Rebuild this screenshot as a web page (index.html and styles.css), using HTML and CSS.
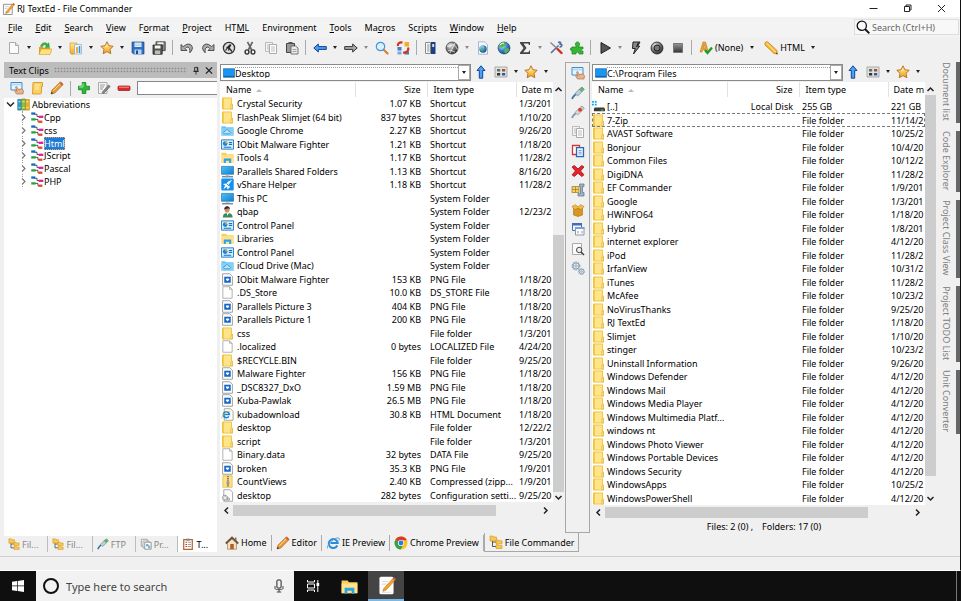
FILE: index.html
```html
<!DOCTYPE html>
<html lang="en">
<head>
<meta charset="utf-8">
<title>RJ TextEd - File Commander</title>
<link rel="stylesheet" href="styles.css">
</head>
<body>
<svg class="sprite" aria-hidden="true">
<defs>
<linearGradient id="gy" x1="0" y1="0" x2="0" y2="1"><stop offset="0" stop-color="#ffe98a"/><stop offset="1" stop-color="#f0a52a"/></linearGradient>
<linearGradient id="gb" x1="0" y1="0" x2="1" y2="1"><stop offset="0" stop-color="#4cc3f5"/><stop offset="1" stop-color="#0f7fd0"/></linearGradient>
<radialGradient id="gg" cx=".35" cy=".3" r=".8"><stop offset="0" stop-color="#d8f0ff"/><stop offset=".5" stop-color="#3a86cc"/><stop offset="1" stop-color="#123c78"/></radialGradient>
<radialGradient id="gk" cx=".35" cy=".3" r=".8"><stop offset="0" stop-color="#eee"/><stop offset=".5" stop-color="#777"/><stop offset="1" stop-color="#222"/></radialGradient>
<linearGradient id="gs" x1="0" y1="0" x2="0" y2="1"><stop offset="0" stop-color="#999"/><stop offset="1" stop-color="#333"/></linearGradient>
<symbol id="app" viewBox="0 0 14 14"><path d="M1.500 2.500h9.500v11h-9.500z" fill="#fff" stroke="#8a8a8a"/><path d="M3 5h5M3 7h3M3 11h6" stroke="#ccc"/><path d="M4.500 10.500L12 1.500l1.500 1.300L6.200 11.600 4 12.500z" fill="#f5a623" stroke="#b56a10" stroke-width=".5"/><path d="M11.300 2.300L12.200 1l1.600 1.300-1 1.200z" fill="#d9534f"/></symbol>
<symbol id="apptask" viewBox="0 0 14 14"><rect x="1.800" y=".5" width="10.400" height="13" rx="1.200" fill="#fff"/><path d="M3.500 4h5M3.500 6h4M3.500 12h7" stroke="#ddd" stroke-width=".8"/><path d="M5 9.300L12 1.500l1.500 1.300-7 7.700-2.200.8z" fill="#f5a623" stroke="#b56a10" stroke-width=".4"/><path d="M11.500 2L12.500 1l1.500 1.300-1 1.100z" fill="#d9534f"/></symbol>
<symbol id="new" viewBox="0 0 14 14"><path d="M2.500 1.500h6l3 3v8h-9z" fill="#fafafa" stroke="#aaa"/><path d="M8.500 1.500v3h3" fill="#ddd" stroke="#aaa"/></symbol>
<symbol id="open" viewBox="0 0 14 14"><path d="M1 6h4l1 1h6v6H1z" fill="#dca126"/><path d="M3 8h11l-2 5.500H1z" fill="#ffe07a" stroke="#c98d1c" stroke-width=".5"/><path d="M2.500 5.500C3 1.500 7.500.5 9.500 3l1.300-1.300.7 4.800H7l1.300-1.700C7 3.400 5 3.500 4.800 5.500z" fill="#38b03c" stroke="#1e8424" stroke-width=".4"/></symbol>
<symbol id="openpg" viewBox="0 0 14 14"><path d="M1 2h7v10l-5 1.500-2-1.500z" fill="url(#gy)" stroke="#cf8f25" stroke-width=".6"/><path d="M5.500 3.500h7v9.500h-7z" fill="#eef6fc" stroke="#93a9bb" stroke-width=".7"/><path d="M8 6v6" stroke="#eb9b23" stroke-width="1.600"/><path d="M10.500 5v7" stroke="#2b9be0" stroke-width="1.600"/></symbol>
<symbol id="star" viewBox="0 0 14 14"><path d="M7 .8l1.900 3.900 4.300.6-3.200 3 .8 4.400L7 10.600l-3.800 2.100.8-4.400-3.200-3 4.300-.6z" fill="url(#gy)" stroke="#b8691a" stroke-width=".9"/><path d="M7 3.200l1 2.500-3.500 1z" fill="#fff6c4" opacity=".7"/></symbol>
<symbol id="save" viewBox="0 0 14 14"><path d="M1 1h12v12H2.500L1 11.500z" fill="#2f6fc4" stroke="#1d4a8a" stroke-width=".7"/><path d="M3.500 1.500h7v4.500h-7z" fill="#e8f2fb"/><path d="M4 3h6M4 4.600h6" stroke="#9bb4cc" stroke-width=".6"/><path d="M3.500 8.500h7V13h-7z" fill="#b7d6f4"/><path d="M5 9.500h2V13H5z" fill="#1d4a8a"/></symbol>
<symbol id="saveall" viewBox="0 0 14 14"><path d="M4 .8h9.200v8.800H4z" fill="#888" stroke="#333" stroke-width=".8"/><path d="M5.500 1.300h6v2h-6z" fill="#eee"/><path d="M1 4h9.200v9.200H1z" fill="#555" stroke="#222" stroke-width=".8"/><path d="M2.800 4.500h5.700v3H2.800z" fill="#f4f4f4"/><path d="M3 9.500h5.200v3.500H3z" fill="#bbb"/></symbol>
<symbol id="undo" viewBox="0 0 14 14"><path d="M1 3.500v6h6L5.200 7.600C7.500 4.800 10.500 6 9.800 11.800 15 7 11.500 2 6.800 3.300L3.200 5.600z" fill="#aaa" stroke="#333" stroke-width=".8"/></symbol>
<symbol id="redo" viewBox="0 0 14 14"><g transform="matrix(-1 0 0 1 14 0)"><path d="M1 3.500v6h6L5.200 7.600C7.500 4.800 10.500 6 9.800 11.800 15 7 11.500 2 6.800 3.300L3.200 5.600z" fill="#aaa" stroke="#333" stroke-width=".8"/></g></symbol>
<symbol id="hist" viewBox="0 0 14 14"><circle cx="7" cy="7" r="5.600" fill="#ddd" stroke="#333" stroke-width="1.300"/><path d="M3.500 9.500L8 3.500M4.500 6.500c2-1 3 1 2 3M9 3.500L7 7l3 3.500" stroke="#222" stroke-width="1.200" fill="none"/></symbol>
<symbol id="cut" viewBox="0 0 14 14"><path d="M4.500.8L8.700 9M9.500.8L5.300 9" stroke="#666" stroke-width="1.700"/><ellipse cx="4" cy="11" rx="1.900" ry="2.100" fill="none" stroke="#333" stroke-width="1.400"/><ellipse cx="10" cy="11" rx="1.900" ry="2.100" fill="none" stroke="#333" stroke-width="1.400"/></symbol>
<symbol id="copy" viewBox="0 0 14 14"><path d="M1.500 1.500h7v9h-7z" fill="#f4f4f4" stroke="#bbb"/><path d="M5.500 3.500h7v9h-7z" fill="#fff" stroke="#aaa"/><path d="M7 6h4M7 8h4M7 10h4M3 4h2M3 6h2M3 8h2" stroke="#bbb"/></symbol>
<symbol id="paste" viewBox="0 0 14 14"><path d="M1.500 2.500h8v9h-8z" fill="#999" stroke="#444"/><path d="M3.500 1h4v2h-4z" fill="#555"/><path d="M6 5h4.500l2.500 2v6H6z" fill="#eee" stroke="#555" stroke-width=".8"/><path d="M7.500 8.500h4M7.500 10.500h4" stroke="#888" stroke-width=".8"/></symbol>
<symbol id="back" viewBox="0 0 14 14"><path d="M.8 7l4.500-4v2.600h8v2.800h-8V11z" fill="#4aa3ea" stroke="#123f9a" stroke-width="1"/></symbol>
<symbol id="fwd" viewBox="0 0 14 14"><path d="M13.200 7L8.700 3v2.600h-8v2.800h8V11z" fill="#aaa" stroke="#333" stroke-width="1"/></symbol>
<symbol id="find" viewBox="0 0 14 14"><path d="M8.500 8.500l4 4" stroke="#d9822b" stroke-width="2.200" stroke-linecap="round"/><circle cx="5.500" cy="5.500" r="4.200" fill="#d9f0fd" stroke="#4a95d6" stroke-width="1.200"/></symbol>
<symbol id="repl" viewBox="0 0 14 14"><path d="M8.500 1h4.500v4.500H8.500z" fill="#f2b01e"/><path d="M1.500 6h4v3.500h-4z" fill="#3b7ed0"/><path d="M1.500 10.500h4v3h-4z" fill="#7aa7de"/><path d="M8.500 10.500h4.500v3H8.500z" fill="#3b7ed0"/><path d="M6.500 1.500C3 1 1.500 3 2 5M12 6.500c1 3-1 5.500-5 5" fill="none" stroke="#d8301c" stroke-width="2.200"/></symbol>
<symbol id="book" viewBox="0 0 14 14"><path d="M1.500 1.500h5v11h-5z" fill="#fafafa" stroke="#888"/><path d="M3 4h2.500M3 6h2.500M3 8h2.500M3 10h2.500" stroke="#888"/><path d="M7 1h4.500v12H7z" fill="#1c3f82"/><path d="M8.200 3h2v3h-2z" fill="#cfe0f8"/></symbol>
<symbol id="gglobe" viewBox="0 0 14 14"><circle cx="7" cy="7" r="6" fill="url(#gk)" stroke="#333" stroke-width=".7"/><path d="M2 4.500C5 7 6 3 9 4s2 5 4 4M3 10c3-2 5 1 7 1M5 12L10 2" stroke="#fff" fill="none" stroke-width=".9" opacity=".8"/></symbol>
<symbol id="web" viewBox="0 0 14 14"><path d="M2.500.8h6l3 3v9.400h-9z" fill="#f2f8fd" stroke="#9ab" stroke-width=".8"/><circle cx="7" cy="8" r="3.700" fill="url(#gg)"/><path d="M5 6.500c2-1 3 1 2 2s0 2-1 2.500" fill="#4cb648"/></symbol>
<symbol id="globe" viewBox="0 0 14 14"><circle cx="7" cy="7" r="6" fill="url(#gg)" stroke="#123c78" stroke-width=".6"/><path d="M3 3c2-2 5-2 6 0S7 5 6 6 3 7 2 5.500zM8 8c2-1 4-1 4 .5S9 13 8 12 7 9 8 8z" fill="#58b947"/><path d="M3 4C4.500 2 6 2 7 2.500" stroke="#fff" fill="none"/></symbol>
<symbol id="sigma" viewBox="0 0 14 14"><path d="M2 1h10v3h-1l-.7-1.400H5.500L8.500 7l-3.300 4.300h5.300L11.300 9.500H12V13H2v-1.200L5.600 7 2 2.300z" fill="#444"/></symbol>
<symbol id="tools" viewBox="0 0 14 14"><path d="M2 12L9.500 4.500M9 1.500c3-1 3 .5 2 1.500l1.500.7c.5-.5 1 2-2 2.500" fill="none" stroke="#51709a" stroke-width="1.600"/><path d="M1.500 1.500l6.500 6" stroke="#889" stroke-width="1.600"/><path d="M8.500 8l4 4" stroke="#d42a20" stroke-width="2.400" stroke-linecap="round"/></symbol>
<symbol id="puz" viewBox="0 0 14 14"><path d="M2 13V9.500C-.5 10 .0 6 2 7V6h4.500C4.500 3 5.500 1 7.500 1s3 2 1 5H13v2c-2-.7-2.500 2.200 0 2v3H9c0-2.500-3-2.500-3 0z" fill="#37b534" stroke="#1b8420" stroke-width=".7"/></symbol>
<symbol id="play" viewBox="0 0 14 14"><path d="M3 1.500L12.500 7 3 12.500z" fill="#555" stroke="#222"/></symbol>
<symbol id="bolt" viewBox="0 0 14 14"><path d="M4 1h7L8.700 5.200h2L4.500 13l1.800-5.500H3.500z" fill="#888" stroke="#222" stroke-width="1"/><path d="M9.500 1.500L7.500 6" stroke="#111"/></symbol>
<symbol id="rec" viewBox="0 0 14 14"><circle cx="7" cy="7" r="6" fill="url(#gk)" stroke="#222" stroke-width=".8"/><circle cx="7" cy="7" r="3" fill="#777" stroke="#222"/></symbol>
<symbol id="stop" viewBox="0 0 14 14"><path d="M2.500 2.500h9v9h-9z" fill="url(#gs)" stroke="#777"/></symbol>
<symbol id="spell" viewBox="0 0 14 14"><path d="M1 11L4 1h2.500l3 10H7.300l-.6-2.200H3.700L3 11zM4.200 7h2L5.200 3.500z" fill="#f0a62c" stroke="#b06a12" stroke-width=".5"/><path d="M6 9l2.500 3L13 6.500" fill="none" stroke="#1d9a2a" stroke-width="2.300"/></symbol>
<symbol id="penl" viewBox="0 0 14 14"><path d="M1 1.500l2.500-.8L13 9.500l.3 3.500-3.300-.5L1 4z" fill="#f7b733" stroke="#c07a1c" stroke-width=".7"/><path d="M2.500 2l9 9" stroke="#fff0b0"/><path d="M12 12l1.500 1" stroke="#333"/></symbol>
<symbol id="pen" viewBox="0 0 14 14"><path d="M1 13l1-3.800L10.300 1l2.700 2.500L4.800 12z" fill="#ec9a38" stroke="#a85f18" stroke-width=".7"/><path d="M9.500 2l2.600 2.500L13.300 3.200 11 .7z" fill="#cf5b34"/><path d="M1 13l.7-2.200 1.500 1.500z" fill="#333"/><path d="M3.300 9.800l7-7" stroke="#ffdc8c"/></symbol>
<symbol id="mon" viewBox="0 0 14 14"><path d="M1 1.500h11v7.500H1z" fill="#eaf6fd" stroke="#3f8ccc"/><path d="M2 2.500h9v2H2z" fill="#b5dcf6"/><path d="M6.500 13L4.500 9.800l1-.6 1.500 1L5.500 6l1.200-.5L8.200 8.500l3.800-.7 1.500 2-.5 3.200z" fill="#e9b48c" stroke="#9b6a44" stroke-width=".6"/></symbol>
<symbol id="script" viewBox="0 0 14 14"><path d="M3 1.500h9.500v4H11.500v5.500c0 2-1 2-1.500 2H2.500z" fill="#fbcf62" stroke="#d6982a" stroke-width=".9"/><path d="M5 4h5M5 6h4M5 8h4" stroke="#fff1b8"/></symbol>
<symbol id="add" viewBox="0 0 14 14"><path d="M5.200 1.500h3.600v3.700h3.700v3.600H8.800v3.700H5.200V8.800H1.500V5.200h3.700z" fill="#2fb63a" stroke="#138220" stroke-width=".8"/><path d="M6 2.500v3.500H2.300" stroke="#a4eba4" fill="none"/></symbol>
<symbol id="edit" viewBox="0 0 14 14"><path d="M1.500 1.500h8.500v11H1.500z" fill="#f5f5f5" stroke="#aaa"/><path d="M3 4h5M3 6h4M3 8h3" stroke="#999"/><path d="M5 11.500l6.500-7.500 1.700 1.500-6.500 7z" fill="#888" stroke="#555" stroke-width=".6"/></symbol>
<symbol id="minus" viewBox="0 0 14 14"><rect x="1" y="5" width="12" height="4.500" rx="1" fill="#dc2a2a" stroke="#9a1414" stroke-width=".7"/><path d="M2 6.200h10" stroke="#f59a9a"/></symbol>
<symbol id="up" viewBox="0 0 14 14"><path d="M7 .8l4 4.700H8.700v7.700H5.300V5.500H3z" fill="#4aa3ea" stroke="#1642a0" stroke-width="1"/></symbol>
<symbol id="view" viewBox="0 0 14 14"><path d="M1 2h12v10H1z" fill="#e2e2e2" stroke="#999" stroke-width=".8"/><path d="M3 4h3.200v2.500H3z" fill="#575"/><path d="M8 4h3.200v2.500H8z" fill="#953"/><path d="M3 8h3.200v2.500H3z" fill="#333"/><path d="M8 8h3.200v2.500H8z" fill="#35a"/></symbol>
<symbol id="plug" viewBox="0 0 14 14"><path d="M1 13c1-3 2-3.500 4-5" stroke="#3f76a5" stroke-width="1.800" fill="none"/><path d="M4 7.500L8.500 3l2.500 2.600L6.700 10z" fill="#bcd0dc" stroke="#6f8c9c" stroke-width=".8"/><path d="M8.500 3L11 1l2.300 2.300L11 5.600z" fill="#63b96c" stroke="#5a8a66" stroke-width=".7"/></symbol>
<symbol id="plugr" viewBox="0 0 14 14"><path d="M1 13c1-3 2-3.500 4-5" stroke="#8696a5" stroke-width="1.800" fill="none"/><path d="M4 7.500L8.500 3l2.500 2.600L6.700 10z" fill="#d4dbe0" stroke="#8497a0" stroke-width=".8"/><path d="M8.500 3L11 1l2.300 2.300L11 5.600z" fill="#c8ccd0" stroke="#889" stroke-width=".7"/><circle cx="9" cy="4.800" r="1.900" fill="#dc3c22"/></symbol>
<symbol id="move" viewBox="0 0 14 14"><path d="M1.500 1.500h7v9h-7z" fill="#fff" stroke="#d03530" stroke-width="1.300"/><path d="M5.500 3.700h7v9h-7z" fill="#eaf3fd" stroke="#2c65b0" stroke-width="1.300"/><path d="M7.500 6.500h3.200M7.500 8.300h3.200M7.500 10h3.200" stroke="#6c9cd6" stroke-width=".9"/></symbol>
<symbol id="del" viewBox="0 0 14 14"><path d="M1 3l2.300-1.500L7 5l3.700-3.500L13 3 9.500 7l3.500 3.800-2.200 1.700L7 9.200l-3.700 3.300L1 10.800 4.500 7z" fill="#e4232a" stroke="#a01015" stroke-width=".8"/></symbol>
<symbol id="arch" viewBox="0 0 14 14"><path d="M1 3.500h7v6H1z" fill="#f3cf66" stroke="#a8842a" stroke-width=".8"/><path d="M1 6.500h7M4.500 3.500v6" stroke="#a8842a" stroke-width=".8"/><path d="M8.500 1H13v2.500h-1.500v6H13V13H7v-2.500h2.500v-7h-1z" fill="#9fb2c5" stroke="#58738c" stroke-width=".7"/></symbol>
<symbol id="box" viewBox="0 0 14 14"><path d="M2.500 5h9v7L7 13.500 2.500 12z" fill="#d9961e" stroke="#a56c10" stroke-width=".6"/><path d="M1 3.500l3.500-1.800L7 4l2.500-2.300L13 3.500 10 6.700 7 5 4 6.700z" fill="#f2bc4a" stroke="#b27a18" stroke-width=".6"/></symbol>
<symbol id="win" viewBox="0 0 14 14"><path d="M1.500 1.500h9v7h-9z" fill="#eef5fc" stroke="#4671b0"/><path d="M1 1h10v2.500H1z" fill="#3f6fbc"/><path d="M4.500 5.500h8.500v7.500H4.500z" fill="#fff" stroke="#8a98ac"/><path d="M4 5h9.500v2H4z" fill="#7f9fd0"/><path d="M6 9h2v2.500H6zM10 9h2v2.500h-2z" fill="#c3cad4"/></symbol>
<symbol id="prev" viewBox="0 0 14 14"><path d="M1.500 1.500h9v11h-9z" fill="#fbfbfb" stroke="#aaa"/><circle cx="8.200" cy="8" r="2.700" fill="#e9f3fa" stroke="#444"/><path d="M10 10l3 3" stroke="#444" stroke-width="1.600"/></symbol>
<symbol id="gears" viewBox="0 0 14 14"><g fill="none" stroke="#8fa5ba"><circle cx="5" cy="5" r="3.800" stroke-width="1.300" stroke-dasharray="1.600 .8"/><circle cx="5" cy="5" r="3"/><circle cx="5" cy="5" r="1.200"/><circle cx="10.500" cy="10.500" r="3" stroke-dasharray="1.500 .7"/><circle cx="10.500" cy="10.500" r="2.300"/><circle cx="10.500" cy="10.500" r=".8"/></g></symbol>
<symbol id="folder" viewBox="0 0 14 14"><path d="M2 1h9.300v6.500h1V13H2z" fill="#ffe48c" stroke="#ecc02e" stroke-width=".9"/><path d="M2 .8v12.400" stroke="#eebb1c" stroke-width="1.200"/><path d="M10.500 8.500h1.900V13h-1.900z" fill="#fbe08a" stroke="#dcae30" stroke-width=".6"/></symbol>
<symbol id="cloud" viewBox="0 0 14 14"><path d="M.5 2.500h4l1 1h8v9H.5z" fill="#6cc4f2"/><path d="M.5 4.500h13v8H.5z" fill="#84d0f7"/><path d="M4 10.500c-2-.3-1.500-2.700.3-2.500.5-2.500 4-2.300 4.200 0 2.300-.2 2.300 2.500.4 2.500z" fill="#b8e4fb" stroke="#3798d4" stroke-width=".9"/></symbol>
<symbol id="cpl" viewBox="0 0 14 14"><path d="M.5 2h13v10H.5z" fill="#d4efff" stroke="#1b7ac4"/><circle cx="4.500" cy="6" r="2.500" fill="#1783d6"/><path d="M4.500 6V3.500A2.500 2.500 0 0 1 7 6z" fill="#f3a432"/><path d="M8.500 5h3.500M8.500 7h3.500M3 10h8" stroke="#1b6fb4" stroke-width="1.200"/></symbol>
<symbol id="lib" viewBox="0 0 14 14"><path d="M.5 2h5l1 1.500h7v9H.5z" fill="#f9cf5b"/><path d="M.5 4.500h13v8H.5z" fill="#ffe28a"/><path d="M3 13V8h8v5H8.800v-2.500H5.200V13z" fill="#2ba4e6"/></symbol>
<symbol id="pc" viewBox="0 0 14 14"><path d="M.5 1.500h13v8.500H.5z" fill="url(#gb)" stroke="#2a6fa4" stroke-width=".7"/><path d="M1 12.700h12" stroke="#4a6a84" stroke-width="1.200"/><path d="M5 10.500h4v1.500H5z" fill="#b5c4d0"/></symbol>
<symbol id="desk" viewBox="0 0 14 14"><path d="M.5 2h13v10H.5z" fill="#1a95f0" stroke="#1168b4" stroke-width=".8"/><path d="M1 11h12" stroke="#0f5a9a"/></symbol>
<symbol id="vs" viewBox="0 0 14 14"><rect x=".3" y=".5" width="13.400" height="13" rx="1" fill="#1590ee"/><path d="M12 2L8 7.500l2 2-3 3-.5-3-4 2.500L4.500 8 2 6.500l4-.5L7.500 4z" fill="#fff"/><path d="M6 6l3 3" stroke="#1590ee"/></symbol>
<symbol id="user" viewBox="0 0 14 14"><path d="M2 13.500c0-4 2-5 5-5s5.500 1 5.500 5z" fill="#3c8a5c"/><ellipse cx="6.500" cy="4.800" rx="2.600" ry="3.400" fill="#c98f68"/><path d="M3.500 4.800C3.300 0 10 0 9.700 5L8.500 3.500z" fill="#3a2c24"/><path d="M6 8.500l1 3 1.500-3z" fill="#fff"/></symbol>
<symbol id="png" viewBox="0 0 14 14"><path d="M1.700.8h7.800l2.800 2.700v9.700H1.700z" fill="#fff" stroke="#8f8f8f" stroke-width=".9"/><path d="M3.500 4h7v6.500h-7z" fill="#1767c4"/><path d="M5.300 6h3.500v1.200L7 9 5.300 7.300z" fill="#fff"/></symbol>
<symbol id="file" viewBox="0 0 14 14"><path d="M2 .8h7.200L12 3.500v9.700H2z" fill="#fff" stroke="#a3a3a3" stroke-width=".9"/><path d="M9.200.8v2.700H12" fill="none" stroke="#a3a3a3" stroke-width=".8"/></symbol>
<symbol id="iefile" viewBox="0 0 14 14"><path d="M3.500.8h6.700L13 3.500v9.700H3.500z" fill="#fff" stroke="#999" stroke-width=".9"/><path d="M8.500 9A3.200 3.200 0 1 1 9 7H3" fill="none" stroke="#1c86dc" stroke-width="1.800"/><path d="M1 11.500C0 9 6 2.500 10 3.500" fill="none" stroke="#f0b429" stroke-width=".9"/></symbol>
<symbol id="zip" viewBox="0 0 14 14"><path d="M2 .8h10v12.400H2z" fill="#ffe082" stroke="#e3b840" stroke-width=".8"/><path d="M7.500 1v12" stroke="#777" stroke-width="2" stroke-dasharray="1.500 .8"/><path d="M6 7h3v3.500H6z" fill="#999"/></symbol>
<symbol id="ini" viewBox="0 0 14 14"><path d="M3 .8h6.700L12.500 3.500v9.700H3z" fill="#fff" stroke="#999" stroke-width=".9"/><circle cx="4.300" cy="9.500" r="2.500" fill="#eee" stroke="#888" stroke-width="1.500" stroke-dasharray="1.200 .6"/><circle cx="8" cy="11" r="1.300" fill="#eee" stroke="#888"/></symbol>
<symbol id="drive" viewBox="0 0 14 14"><path d="M0 1h2v2H0zM3 1h2v2H3zM0 4h2v2H0zM3 4h2v2H3z" fill="#1ba8f0"/><path d="M3 8h10l1 1.500v2.500H2V9.500z" fill="#3a3a3a"/><path d="M9.500 10.800h3" stroke="#4ee04e"/></symbol>
<symbol id="books" viewBox="0 0 14 14"><path d="M.8 1.500h3.800v11.500H.8z" fill="#2f9fc8" stroke="#1a5c80" stroke-width=".6"/><path d="M5 1h4v12H5z" fill="#8cc43c" stroke="#4c7c1c" stroke-width=".6"/><path d="M9.300 1.500h4v11.500h-4z" fill="#f0b428" stroke="#a87010" stroke-width=".6"/><path d="M1.500 4h2.500M5.800 4h2.500M10 4h2.500M1.500 10.500h2.500M5.800 10.500h2.500M10 10.500h2.500" stroke="#fff" opacity=".7"/></symbol>
<symbol id="node" viewBox="0 0 14 14"><path d="M4 3.500h3V6h3M4 9h4v2.500h2" fill="none" stroke="#333" stroke-width=".9"/><path d="M.8 1.500h4.400v2.500H.8z" fill="#1668c8"/><path d="M8.800 5h5v2.500h-5z" fill="#e01ea0"/><path d="M.8 7.800h4.700v2.500H.8z" fill="#22a83a"/><path d="M8.500 10.300h4.300v2.500H8.500z" fill="#e04a20"/></symbol>
<symbol id="ftree" viewBox="0 0 14 14"><path d="M3.500 5v6.500H8M3.500 7H8" fill="none" stroke="#555"/><path d="M1 1h3l.7 1H7.500v4H1z" fill="#f8c84a" stroke="#cf9420" stroke-width=".6"/><path d="M7 5h2.500l.6.800H13v3H7zM7 9.700h2.500l.6.800H13v3H7z" fill="#f8c84a" stroke="#cf9420" stroke-width=".6"/></symbol>
<symbol id="proj" viewBox="0 0 14 14"><path d="M1.500 1.500h7v8h-7z" fill="#fff" stroke="#999"/><path d="M3.500 3.500h7v8h-7z" fill="#fff" stroke="#999"/><path d="M5.500 5h7.500v8H5.500z" fill="#fff" stroke="#888"/><circle cx="8.500" cy="8.500" r="1.500" fill="#4ab0e0"/><path d="M9.500 9h2.500v3H9.500z" fill="#8ab"/></symbol>
<symbol id="clip" viewBox="0 0 14 14"><path d="M2 2h10v11.300H2z" fill="#fff" stroke="#b4632c" stroke-width="1.400"/><path d="M5 .7h4v2.500H5z" fill="#888"/><path d="M4 5h2M4 7.500h2M4 10h2" stroke="#c33" stroke-width="1.200"/><path d="M7 5h3.500M7 7.500h3.500M7 10h3.500" stroke="#888"/></symbol>
<symbol id="home" viewBox="0 0 14 14"><path d="M2.500 6.500L7 3l4.500 3.500v6.700h-9z" fill="#f3e2c4" stroke="#a08050" stroke-width=".7"/><path d="M.8 7.500L7 1.500l6.200 6" fill="none" stroke="#6e5038" stroke-width="1.800"/><path d="M5.200 8h3.600v5.200H5.200z" fill="#b4602a"/><path d="M10 1.500h1.500V5L10 3.700z" fill="#777"/></symbol>
<symbol id="ie" viewBox="0 0 14 14"><path d="M11.300 9.500A4.500 4.500 0 1 1 11.700 7H4.500" fill="none" stroke="#2a8cd8" stroke-width="2"/><path d="M1.600 12.500C-.5 10.500 8 .8 12.700 2c.9.300.8 1.500.2 2.700" fill="none" stroke="#5aa0d4" stroke-width="1"/></symbol>
<symbol id="chrome" viewBox="0 0 14 14"><circle cx="7" cy="7" r="6.500" fill="#fcc31e"/><path d="M7 7L1.400 3.800A6.500 6.500 0 0 1 12.900 4.200H7z" fill="#e2382c"/><path d="M7 7L1.400 3.800A6.500 6.500 0 0 0 6.600 13.500L9.500 8.500z" fill="#2fa24a"/><circle cx="7" cy="7" r="3.100" fill="#fff"/><circle cx="7" cy="7" r="2.400" fill="#2f78e0"/></symbol>
<symbol id="lens" viewBox="0 0 14 14"><circle cx="5.800" cy="5.800" r="4.600" fill="none" stroke="#111" stroke-width="1.300"/><path d="M9 9l4.300 4.300" stroke="#111" stroke-width="1.900"/></symbol>
<symbol id="winlogo" viewBox="0 0 14 14"><path d="M1 2.700l5-.7v4.600H1zM6.700 1.900L13 1v5.600H6.700zM1 7.300h5v4.600l-5-.7zM6.700 7.300H13v5.600l-6.300-.9z" fill="#fff"/></symbol>
<symbol id="mic" viewBox="0 0 14 14"><rect x="4.900" y="1" width="4.200" height="8" rx="1" fill="none" stroke="#222"/><path d="M3 7v2.500c0 1.500 8 1.500 8 0V7M7 10.800V13M4.800 13h4.400" fill="none" stroke="#333" stroke-width=".9"/></symbol>
<symbol id="task" viewBox="0 0 14 14"><path d="M1.500 1v2h7V1M1.500 13v-2h7v2M1.500 5h7v4h-7zM11.800 1v12" fill="none" stroke="#fff"/><path d="M10.500 4h2.700v3h-2.700z" fill="#fff"/></symbol>
</defs>
</svg>

<div class="window">
<header class="titlebar">
  <svg class="ic"><use href="#app"/></svg><h1>RJ TextEd - File Commander</h1>
  <div class="winbtns">
    <button aria-label="Minimize"><svg viewBox="0 0 9 9"><path d="M.5 4.500h8"/></svg></button>
    <button aria-label="Restore"><svg viewBox="0 0 9 9"><path d="M1.500 2.500h5v5h-5zM3 2.500V1h5v5H6.500"/></svg></button>
    <button aria-label="Close"><svg viewBox="0 0 9 9"><path d="M1 1l7 7M8 1L1 8"/></svg></button>
  </div>
</header>
<nav class="menubar">
  <button><u>F</u>ile</button><button><u>E</u>dit</button><button><u>S</u>earch</button><button><u>V</u>iew</button><button>F<u>o</u>rmat</button><button><u>P</u>roject</button><button>HT<u>M</u>L</button><button>Enviro<u>n</u>ment</button><button><u>T</u>ools</button><button>Ma<u>c</u>ros</button><button>Sc<u>r</u>ipts</button><button><u>W</u>indow</button><button><u>H</u>elp</button>
  <label class="quick"><svg class="ic"><use href="#lens"/></svg><input type="text" placeholder="Search (Ctrl+H)" aria-label="Search"></label>
</nav>
<div class="toolbar">
  <button class="tb" aria-label="New"><svg class="ic"><use href="#new"/></svg></button><button class="dd" aria-label="New menu"></button>
  <button class="tb" aria-label="Open"><svg class="ic"><use href="#open"/></svg></button><button class="dd" aria-label="Open menu"></button>
  <button class="tb" aria-label="Open page"><svg class="ic"><use href="#openpg"/></svg></button><button class="dd" aria-label="Page menu"></button>
  <button class="tb" aria-label="Favorites"><svg class="ic"><use href="#star"/></svg></button><button class="dd" aria-label="Favorites menu"></button>
  <button class="tb" aria-label="Save"><svg class="ic"><use href="#save"/></svg></button>
  <button class="tb" aria-label="Save all"><svg class="ic"><use href="#saveall"/></svg></button>
  <i class="sep"></i>
  <button class="tb" aria-label="Undo"><svg class="ic"><use href="#undo"/></svg></button>
  <button class="tb" aria-label="Redo"><svg class="ic"><use href="#redo"/></svg></button>
  <button class="tb" aria-label="History"><svg class="ic"><use href="#hist"/></svg></button>
  <button class="tb" aria-label="Cut"><svg class="ic"><use href="#cut"/></svg></button>
  <button class="tb" aria-label="Copy"><svg class="ic"><use href="#copy"/></svg></button>
  <button class="tb" aria-label="Paste"><svg class="ic"><use href="#paste"/></svg></button>
  <i class="sep"></i>
  <button class="tb" aria-label="Back"><svg class="ic"><use href="#back"/></svg></button><button class="dd" aria-label="Back menu"></button>
  <button class="tb" aria-label="Forward"><svg class="ic"><use href="#fwd"/></svg></button><button class="dd off" aria-label="Forward menu"></button>
  <button class="tb" aria-label="Find"><svg class="ic"><use href="#find"/></svg></button>
  <button class="tb" aria-label="Replace"><svg class="ic"><use href="#repl"/></svg></button>
  <i class="sep"></i>
  <button class="tb" aria-label="Book"><svg class="ic"><use href="#book"/></svg></button>
  <button class="tb" aria-label="Browser"><svg class="ic"><use href="#gglobe"/></svg></button><button class="dd off" aria-label="Browser menu"></button>
  <button class="tb" aria-label="Web page"><svg class="ic"><use href="#web"/></svg></button>
  <button class="tb" aria-label="Web"><svg class="ic"><use href="#globe"/></svg></button>
  <button class="tb" aria-label="Sum"><svg class="ic"><use href="#sigma"/></svg></button><button class="dd off" aria-label="Sum menu"></button>
  <button class="tb" aria-label="Options"><svg class="ic"><use href="#tools"/></svg></button>
  <button class="tb" aria-label="Plugins"><svg class="ic"><use href="#puz"/></svg></button>
  <i class="sep"></i>
  <button class="tb" aria-label="Run"><svg class="ic"><use href="#play"/></svg></button><button class="dd off" aria-label="Run menu"></button>
  <button class="tb" aria-label="Execute"><svg class="ic"><use href="#bolt"/></svg></button>
  <button class="tb" aria-label="Record"><svg class="ic"><use href="#rec"/></svg></button>
  <button class="tb" aria-label="Stop"><svg class="ic"><use href="#stop"/></svg></button>
  <i class="sep"></i>
  <button class="tx"><svg class="ic"><use href="#spell"/></svg>(None)</button><button class="dd wide" aria-label="Spelling menu"></button>
  <button class="tx"><svg class="ic"><use href="#penl"/></svg>HTML</button><button class="dd wide" aria-label="Syntax menu"></button>
</div>

<main class="work">
  <aside class="clips">
    <div class="cliphead"><h2>Text Clips</h2><span class="grip"></span>
      <button aria-label="Pin"><svg viewBox="0 0 9 9"><path d="M3 1h3.500v4.500H3zM1.500 5.500h6M4.500 5.500V9M6 1v4"/></svg></button>
      <button aria-label="Close"><svg class="x" viewBox="0 0 9 9"><path d="M1 1l7 7M8 1L1 8"/></svg></button></div>
    <div class="cliptools">
      <button aria-label="Insert"><svg class="ic"><use href="#mon"/></svg></button>
      <button aria-label="Scripts"><svg class="ic"><use href="#script"/></svg></button>
      <button aria-label="Edit"><svg class="ic"><use href="#pen"/></svg></button>
      <i class="sep"></i>
      <button aria-label="Add"><svg class="ic"><use href="#add"/></svg></button>
      <button aria-label="Modify"><svg class="ic"><use href="#edit"/></svg></button>
      <button aria-label="Remove"><svg class="ic"><use href="#minus"/></svg></button>
      <input type="text" aria-label="Filter clips">
    </div>
    <div class="tree">
      <div class="root"><svg class="chev" viewBox="0 0 9 9"><path d="M1 2.500L4.500 6 8 2.500"/></svg><svg class="ic"><use href="#books"/></svg><span>Abbreviations</span></div>
      <ul id="clips"></ul>
    </div>
    <div class="cliptabs">
      <button><svg class="ic"><use href="#ftree"/></svg>Fil...</button><button><svg class="ic"><use href="#ftree"/></svg>Fil...</button><button><svg class="ic"><use href="#plug"/></svg>FTP</button><button><svg class="ic"><use href="#proj"/></svg>Pr...</button><button class="on"><svg class="ic"><use href="#clip"/></svg>T...</button>
    </div>
  </aside>

  <div class="center">
    <div class="panes">
      <section class="pane">
        <div class="pathbar">
          <div class="combo"><svg class="ic"><use href="#desk"/></svg><select aria-label="Left path"><option>Desktop</option></select><span class="arrow"></span></div>
          <button class="tb" aria-label="Up"><svg class="ic"><use href="#up"/></svg></button><button class="tb" aria-label="View"><svg class="ic"><use href="#view"/></svg></button><button class="dd" aria-label="View menu"></button><button class="tb" aria-label="Favorites"><svg class="ic"><use href="#star"/></svg></button><button class="dd" aria-label="Favorites menu"></button>
        </div>
        <div class="list">
          <div class="view"><table><thead><tr><th>Name <i></i></th><th>Size</th><th>Item type</th><th>Date m</th></tr></thead><tbody id="left"></tbody></table></div>
          <div class="vbar low"><svg class="chev" viewBox="0 0 9 9"><path d="M1.500 6l3-3 3 3"/></svg><span></span><svg class="chev" viewBox="0 0 9 9"><path d="M1.500 3l3 3 3-3"/></svg></div>
        </div>
        <div class="hbar"><svg class="chev" viewBox="0 0 9 9"><path d="M6 1.500l-3 3 3 3"/></svg><div><span></span></div><svg class="chev" viewBox="0 0 9 9"><path d="M3 1.500l3 3-3 3"/></svg></div>
      </section>
      <div class="sidetools">
        <button aria-label="Select"><svg class="ic"><use href="#mon"/></svg></button>
        <button aria-label="Connect"><svg class="ic"><use href="#plug"/></svg></button>
        <button aria-label="Disconnect"><svg class="ic"><use href="#plugr"/></svg></button>
        <button aria-label="Copy"><svg class="ic"><use href="#copy"/></svg></button>
        <button aria-label="Move"><svg class="ic"><use href="#move"/></svg></button>
        <button aria-label="Delete"><svg class="ic"><use href="#del"/></svg></button>
        <button aria-label="Pack"><svg class="ic"><use href="#arch"/></svg></button>
        <button aria-label="Unpack"><svg class="ic"><use href="#box"/></svg></button>
        <button aria-label="Panels"><svg class="ic"><use href="#win"/></svg></button>
        <button aria-label="Preview"><svg class="ic"><use href="#prev"/></svg></button>
        <button aria-label="Settings"><svg class="ic"><use href="#gears"/></svg></button>
      </div>
      <section class="pane right">
        <div class="pathbar">
          <div class="combo"><svg class="ic"><use href="#desk"/></svg><select aria-label="Right path"><option>C:\Program Files</option></select><span class="arrow"></span></div>
          <button class="tb" aria-label="Up"><svg class="ic"><use href="#up"/></svg></button><button class="tb" aria-label="View"><svg class="ic"><use href="#view"/></svg></button><button class="dd" aria-label="View menu"></button><button class="tb" aria-label="Favorites"><svg class="ic"><use href="#star"/></svg></button><button class="dd" aria-label="Favorites menu"></button>
        </div>
        <div class="list">
          <div class="view"><table><thead><tr><th>Name <i></i></th><th>Size</th><th>Item type</th><th>Date m</th></tr></thead><tbody id="right"></tbody></table></div>
          <div class="vbar"><svg class="chev" viewBox="0 0 9 9"><path d="M1.500 6l3-3 3 3"/></svg><span></span><svg class="chev" viewBox="0 0 9 9"><path d="M1.500 3l3 3 3-3"/></svg></div>
        </div>
        <div class="hbar"><svg class="chev" viewBox="0 0 9 9"><path d="M6 1.500l-3 3 3 3"/></svg><div><span></span></div><svg class="chev" viewBox="0 0 9 9"><path d="M3 1.500l3 3-3 3"/></svg></div>
        <p class="count"><span>Files: 2 (0) ,</span><span>Folders: 17 (0)</span></p>
      </section>
    </div>
    <div class="doctabs">
      <button><svg class="ic"><use href="#home"/></svg>Home</button><button><svg class="ic"><use href="#pen"/></svg>Editor</button><button><svg class="ic"><use href="#ie"/></svg>IE Preview</button><button><svg class="ic"><use href="#chrome"/></svg>Chrome Preview</button><button class="on"><svg class="ic"><use href="#ftree"/></svg>File Commander</button>
    </div>
  </div>
  <nav class="dock"><button>Document list</button><button>Code Explorer</button><button>Project Class View</button><button>Project TODO List</button><button>Unit Converter</button></nav>
</main>
<div class="status"></div>
</div>
<footer class="taskbar">
  <button class="start" aria-label="Start"><svg class="ic"><use href="#winlogo"/></svg></button>
  <label class="cortana"><span class="ring"></span><input type="text" placeholder="Type here to search" aria-label="Type here to search"><svg class="ic"><use href="#mic"/></svg></label>
  <button aria-label="Task view"><svg class="ic"><use href="#task"/></svg></button>
  <button aria-label="File Explorer"><svg class="ic big"><use href="#lib"/></svg></button>
  <button class="on" aria-label="RJ TextEd"><svg class="ic large"><use href="#apptask"/></svg></button>
  <span class="peek"></span>
</footer>
<script src="script.js"></script>
</body>
</html>
```
FILE: styles.css
```css
* { box-sizing: border-box; }
:root { --ui: "Noto Sans", "Open Sans", sans-serif; --bg: #f0f0f0; --thumb: #cdcdcd; }
body { margin: 0; min-height: 100vh; display: flex; flex-direction: column; overflow: hidden; background: #111; color: #000; font: 9px/13px var(--ui); }
button, input, select { font: inherit; color: inherit; border: 0; background: none; padding: 0; margin: 0; border-radius: 0; outline: 0; }
button { white-space: nowrap; }
h1, h2, p, ul { margin: 0; padding: 0; font: inherit; list-style: none; }
.sprite { position: absolute; width: 0; height: 0; }
.ic { width: 14px; height: 14px; flex: none; display: block; }
.chev { width: 9px; height: 9px; flex: none; fill: none; stroke: #222; stroke-width: 1.500; }

.window { flex: 1; display: flex; flex-direction: column; background: var(--bg); border-right: 1px solid #111; border-bottom: 1px solid #fff; }

.titlebar { display: flex; align-items: center; height: 17px; padding: 0 10px 0 2px; background: #fff; }
.titlebar h1 { padding-left: 2px; }
.titlebar .ic { width: 13px; height: 13px; }
.winbtns { margin-left: auto; display: flex; gap: 16px; }
.winbtns button { width: 18px; height: 15px; display: grid; place-items: center; }
.winbtns svg { width: 9px; height: 9px; fill: none; stroke: #222; stroke-width: 1; }

.menubar { display: flex; align-items: center; gap: 13px; height: 20px; padding: 0 1px 0 8px; background: #f3f3f3; }
.menubar u { text-underline-offset: 1px; }
.quick { margin-left: auto; display: flex; align-items: center; gap: 2px; width: 105px; height: 16px; padding-left: 1px; border: 1px solid #ddd; background: #f8f8f8; }
.quick input { width: 80px; flex: 1; }
.quick input::placeholder { color: #666; opacity: 1; }

.toolbar { display: flex; align-items: center; height: 21px; padding-left: 3px; }
.tb { width: 21px; height: 18px; display: grid; place-items: center; flex: none; }
.dd { width: 10px; height: 18px; display: grid; place-items: center; flex: none; }
.dd::before, .arrow::before { content: ""; border: 2px solid transparent; border-top: 3px solid #222; border-bottom: 0; }
.dd.off::before { border-top-color: #888; }
.dd.wide { width: 17px; }
.tx { display: flex; align-items: center; gap: 2px; padding-left: 4px; }
.sep { width: 7px; height: 15px; flex: none; }
.sep::before { content: ""; display: block; width: 1px; height: 100%; margin: 0 auto; background: #aaa; }

.work { flex: 1; display: flex; padding: 4px 0 4px 4px; min-height: 0; }
.clips { width: 213px; flex: none; display: flex; flex-direction: column; overflow: hidden; }
.cliphead { display: flex; align-items: center; gap: 5px; height: 16px; padding: 0 4px 0 5px; background: #bcbcbc; flex: none; }
.grip { flex: 1; height: 6px; background: radial-gradient(circle, #8c8c8c 40%, transparent 50%) 0 0 / 3px 3px; }
.cliphead svg { display: block; width: 8px; height: 9px; fill: none; stroke: #222; }
.cliphead .x { stroke-width: 1.500; }
.cliptools { display: flex; align-items: center; height: 20px; padding-left: 3px; flex: none; }
.cliptools button { width: 20px; flex: none; display: grid; place-items: center; }
.cliptools input { flex: 1; min-width: 0; height: 14px; margin-left: 3px; border: 1px solid #888; border-right: 0; background: #fff; }
.tree { flex: 1; background: #fff; }
.root { display: flex; align-items: center; gap: 2px; height: 13px; padding-left: 2px; }
.root .ic { width: 13px; height: 13px; }
.tree ul { margin-left: 18px; border-left: 1px dotted #999; }
.tree li { display: flex; align-items: center; height: 13px; }
.tree li:nth-child(3n) { height: 12px; }
.tree li .chev { stroke: #777; stroke-width: 1.200; background: #fff; margin: 0 2px 0 -4px; }
.tree li .ic { height: 13px; }
.tree .sel { background: #1c7ad8; color: #fff; outline: 1px dotted #e8a050; outline-offset: -1px; }
.cliptabs { display: flex; height: 16px; flex: none; color: #888; }
.cliptabs button { display: flex; align-items: center; gap: 2px; flex: 1 1 auto; padding-left: 4px; border-right: 1px solid #bbb; }
.cliptabs .ic { width: 12px; height: 12px; }
.cliptabs .on { background: #fff; color: #000; border: 0; }

.center { flex: 1; min-width: 0; padding-left: 3px; display: flex; flex-direction: column; }
.panes { display: flex; flex: none; }
.pane { flex: 1; min-width: 0; display: flex; flex-direction: column; }
.pane.right { margin-left: 2px; }
.pathbar { display: flex; align-items: center; height: 19px; padding-right: 13px; }
.pathbar .tb { width: 20px; }
.combo { flex: 1; display: flex; align-items: center; height: 17px; padding-left: 2px; border: 1px solid #8a8a8a; background: #fff; align-self: flex-end; }
.combo .ic { width: 12px; height: 12px; }
.combo select { flex: 1; min-width: 0; appearance: none; height: 11px; line-height: 11px; border-top: 1px dotted #999; }
.arrow { width: 12px; height: 15px; display: grid; place-items: center; border: 1px solid #aaa; background: #fff; }
.list { flex: none; display: flex; margin-top: 1px; }
.view { flex: 1; min-width: 0; overflow: hidden; background: #fff; }
table { width: 100%; table-layout: fixed; border-collapse: collapse; }
th, td { padding: 0; font-weight: 400; text-align: left; white-space: nowrap; overflow: hidden; line-height: 13px; }
th { height: 15px; padding-left: 6px; border-right: 1px solid #e2e2e2; }
th:last-child { border: 0; padding-left: 5px; }
th:nth-child(1) { width: 135px; }
th:nth-child(2) { width: 72px; }
th:nth-child(3) { width: 89px; }
th i { display: inline-block; border: 3px solid transparent; border-top: 0; border-bottom: 3px solid #bbb; vertical-align: middle; margin-left: 2px; }
th:nth-child(2), td:nth-child(2) { text-align: right; padding-right: 6px; }
td { height: 13px; padding-left: 3px; }
tr:nth-child(even) td { height: 14px; }
td:first-child { padding-left: 1px; }
td:first-child div { display: flex; align-items: center; gap: 3px; height: 13px; }
td .ic { width: 13px; height: 13px; }
.right td:first-child { padding-left: 0; }
.right td:first-child div { gap: 2px; }
.right tbody::before { content: ""; display: block; height: 3px; }
.right .focus { outline: 1px dashed #777; outline-offset: -1px; }
.vbar { width: 11px; flex: none; display: flex; flex-direction: column; align-items: center; padding: 3px 0 2px; gap: 1px; }
.vbar span { width: 11px; height: 381px; background: var(--thumb); }
.vbar.low span { height: 257px; margin-top: auto; }
.vbar svg:last-child { margin-top: auto; }
.vbar.low { padding-bottom: 0; }
.vbar.low svg:last-child { margin-top: 0; }
.hbar { display: flex; align-items: center; height: 12px; padding: 0 14px 0 2px; margin-top: 2px; gap: 2px; }
.right .hbar { margin-top: 1px; }
.hbar div { flex: 1; height: 11px; }
.hbar span { display: block; width: 86%; height: 100%; background: var(--thumb); }
.count { display: flex; justify-content: center; gap: 9px; margin-top: 2px; }
.sidetools { width: 25px; flex: none; display: flex; flex-direction: column; min-height: 470px; border: 1px solid #a8a8a8; margin-left: 1px; }
.sidetools button { height: 19px; display: grid; place-items: center; }
.sidetools button:nth-child(odd) { height: 20px; }
.doctabs { display: flex; height: 19px; flex: none; align-items: center; padding-left: 1px; }
.doctabs button { display: flex; align-items: center; gap: 2px; height: 16px; padding: 0 4px; border-right: 1px solid #aaa; }
.doctabs .on { height: 19px; border: 1px solid #a8a8a8; border-top: 0; }

.dock { width: 24px; flex: none; display: flex; flex-direction: column; gap: 8px; align-items: flex-end; color: #808080; }
.dock button { writing-mode: vertical-rl; padding: 0 3px 2px 0; border-right: 4px solid #666; width: 20px; text-align: left; }

.status { height: 14px; border-top: 1px solid #d0d0d0; flex: none; }
.taskbar { height: 31px; display: flex; background: #0f0f0f; border-bottom: 1px solid #000; }
.taskbar button { width: 37px; display: grid; place-items: center; flex: none; }
.taskbar .start { width: 36px; }
.cortana { width: 258px; flex: none; display: flex; align-items: center; gap: 7px; padding: 0 8px 0 7px; background: #f2f2f2; }
.cortana input { flex: 1; min-width: 0; font-size: 11px; line-height: 15px; }
.cortana input::placeholder { color: #444; opacity: 1; }
.ring { width: 16px; height: 16px; border: 2px solid #111; border-radius: 50%; }
.taskbar .big { width: 17px; height: 17px; }
.taskbar .large { width: 19px; height: 19px; }
.taskbar .on { width: 36px; background: #444; border-bottom: 2px solid #76b9ed; }
.peek { margin-left: auto; border-left: 1px solid #777; width: 5px; }
```
FILE: script.js
```js
const left = `folder|Crystal Security|1.07 KB|Shortcut|1/3/201
folder|FlashPeak Slimjet (64 bit)|837 bytes|Shortcut|1/10/20
cloud|Google Chrome|2.27 KB|Shortcut|9/26/20
cpl|IObit Malware Fighter|1.21 KB|Shortcut|1/18/20
lib|iTools 4|1.17 KB|Shortcut|11/28/2
pc|Parallels Shared Folders|1.13 KB|Shortcut|8/16/20
vs|vShare Helper|1.18 KB|Shortcut|11/28/2
pc|This PC||System Folder|
user|qbap||System Folder|12/23/2
cpl|Control Panel||System Folder|
lib|Libraries||System Folder|
cpl|Control Panel||System Folder|
cloud|iCloud Drive (Mac)||System Folder|
png|IObit Malware Fighter|153 KB|PNG File|1/18/20
file|.DS_Store|10.0 KB|DS_STORE File|1/18/20
png|Parallels Picture 3|404 KB|PNG File|1/18/20
png|Parallels Picture 1|200 KB|PNG File|1/18/20
folder|css||File folder|1/3/201
file|.localized|0 bytes|LOCALIZED File|4/24/20
folder|$RECYCLE.BIN||File folder|9/25/20
png|Malware Fighter|156 KB|PNG File|1/18/20
png|_DSC8327_DxO|1.59 MB|PNG File|1/18/20
png|Kuba-Pawlak|26.5 MB|PNG File|1/18/20
iefile|kubadownload|30.8 KB|HTML Document|1/18/20
folder|desktop||File folder|12/22/2
folder|script||File folder|1/3/201
file|Binary.data|32 bytes|DATA File|9/25/20
png|broken|35.3 KB|PNG File|1/9/201
zip|CountViews|2.40 KB|Compressed (zipp...|1/9/201
ini|desktop|282 bytes|Configuration setti...|9/25/20`;

const folders = `7-Zip|11/14/2
AVAST Software|10/25/2
Bonjour|10/4/20
Common Files|10/12/2
DigiDNA|11/28/2
EF Commander|1/9/201
Google|1/3/201
HWiNFO64|1/18/20
Hybrid|1/8/201
internet explorer|4/12/20
iPod|11/28/2
IrfanView|10/31/2
iTunes|11/28/2
McAfee|10/23/2
NoVirusThanks|9/25/20
RJ TextEd|1/18/20
Slimjet|1/10/20
stinger|10/23/2
Uninstall Information|9/26/20
Windows Defender|4/12/20
Windows Mail|4/12/20
Windows Media Player|4/12/20
Windows Multimedia Platf...|4/12/20
windows nt|4/12/20
Windows Photo Viewer|4/12/20
Windows Portable Devices|4/12/20
Windows Security|4/12/20
WindowsApps|10/25/2
WindowsPowerShell|4/12/20`;

const icon = id => `<svg class="ic"><use href="#${id}"/></svg>`;
const row = ([ic, name, size, type, date]) =>
  `<tr${name === '7-Zip' ? ' class="focus"' : ''}><td><div>${icon(ic)}<span>${name}</span></div></td><td>${size}</td><td>${type}</td><td>${date}</td></tr>`;

document.getElementById('left').innerHTML =
  left.split('\n').map(line => row(line.split('|'))).join('');

document.getElementById('right').innerHTML =
  row(['drive', '[..]', 'Local Disk', '255 GB', '221 GB']) +
  folders.split('\n').map(line => {
    const [name, date] = line.split('|');
    return row(['folder', name, '', 'File folder', date]);
  }).join('');

document.getElementById('clips').innerHTML =
  ['Cpp', 'css', 'Html', 'JScript', 'Pascal', 'PHP'].map(name =>
    `<li><svg class="chev" viewBox="0 0 9 9"><path d="M3 1.500l3 3-3 3"/></svg>${icon('node')}<span${name === 'Html' ? ' class="sel"' : ''}>${name}</span></li>`).join('');
```
